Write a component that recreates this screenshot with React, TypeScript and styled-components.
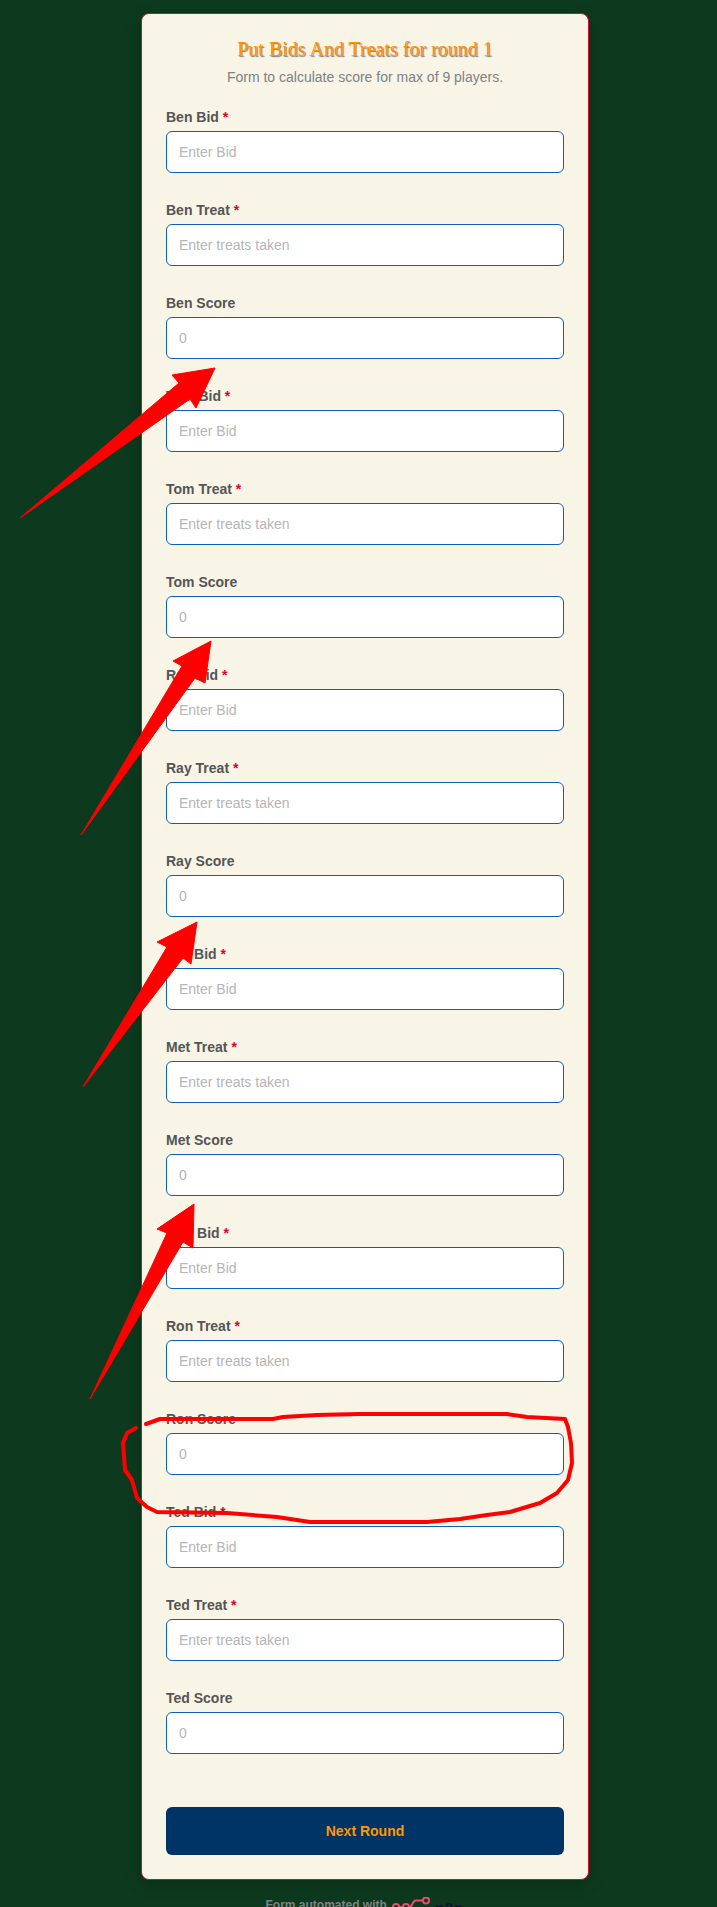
import React from 'react';
import styled, { createGlobalStyle } from 'styled-components';

const players = ['Ben', 'Tom', 'Ray', 'Met', 'Ron', 'Ted'];

const GlobalStyle = createGlobalStyle`
  html, body {
    margin: 0;
    padding: 0;
    background: #0d3a1e;
    font-family: "Liberation Sans", Arial, sans-serif;
  }
  * { box-sizing: border-box; }
`;

const Page = styled.div`
  position: relative;
  width: 717px;
  height: 1907px;
  overflow: hidden;
  padding: 13px 128px 0 141px;
`;

const Card = styled.form`
  padding: 23px 24px 24px;
  background: #f8f4e6;
  border: 1px solid #c8102e;
  border-radius: 8px;
  box-shadow: 0 4px 16px rgba(0, 0, 0, 0.22);
`;

const Header = styled.header`
  text-align: center;
  margin-bottom: 20px;
`;

const Title = styled.h1`
  margin: 0 0 7px;
  font-family: "Liberation Serif", "Times New Roman", serif;
  font-size: 20px;
  line-height: 24px;
  font-weight: 400;
  color: #ff9500;
  text-shadow: 1px 1px 1px #7a7a7a;
`;

const Subtitle = styled.p`
  margin: 0;
  font-size: 14px;
  line-height: 18px;
  color: #7e8186;
`;

const Field = styled.div`
  margin-bottom: 26px;

  &:last-of-type {
    margin-bottom: 0;
  }
`;

const Label = styled.label`
  display: block;
  height: 21px;
  margin-bottom: 4px;
  font-size: 14px;
  line-height: 23px;
  font-weight: 700;
  color: #555555;
`;

const Required = styled.span`
  color: #e0002b;
`;

const Input = styled.input`
  display: block;
  width: 100%;
  height: 42px;
  padding: 0 12px;
  background: #ffffff;
  border: 1px solid #0b5fb8;
  border-radius: 6px;
  font-family: inherit;
  font-size: 14px;
  color: #555555;
  outline: none;

  &::placeholder {
    color: #b5b5b5;
    opacity: 1;
  }
`;

const Submit = styled.button`
  display: block;
  width: 100%;
  height: 48px;
  margin-top: 53px;
  background: #003366;
  border: none;
  border-radius: 6px;
  font-family: inherit;
  font-size: 14px;
  font-weight: 700;
  color: #ff9800;
`;

const Footer = styled.div`
  display: flex;
  align-items: flex-start;
  justify-content: center;
  gap: 5px;
  height: 16px;
  margin-top: 17px;
  font-size: 12px;
  line-height: 16px;
  font-weight: 700;
  color: #7e8186;
`;

const Logo = styled.svg`
  flex: none;
`;

const Brand = styled.span`
  padding-top: 3px;
  font-size: 15px;
  letter-spacing: 1px;
  color: #101330;
`;

const Markup = styled.svg`
  position: absolute;
  top: 0;
  left: 0;
  pointer-events: none;
`;

const arrows = [
  '20,518 179,383 172,375 215,368 196,408 190,399',
  '81,835 182,666 173,661 211,641 205,683 195,678',
  '83,1087 167,947 157,942 197,922 191,964 183,958',
  '90,1399 167,1233 157,1229 194,1204 193,1248 183,1242',
];

const scribble =
  'M146 1424 L160 1419 L273 1419 L283 1417 L317 1415 L360 1414 L507 1414 L527 1417 L565 1419 L568 1427 L571 1443 L572 1463 L568 1480 L557 1493 L540 1503 L510 1512 L487 1515 L460 1519 L427 1522 L310 1522 L277 1517 L227 1513 L157 1512 L147 1507 L137 1498 L132 1480 L125 1470 L123 1443 L127 1433 L136 1428';

export default function App() {
  return (
    <Page>
      <GlobalStyle />
      <Card onSubmit={(e) => e.preventDefault()}>
        <Header>
          <Title>Put Bids And Treats for round 1</Title>
          <Subtitle>Form to calculate score for max of 9 players.</Subtitle>
        </Header>
        {players.map((name) => (
          <React.Fragment key={name}>
            <Field>
              <Label>
                {name} Bid <Required>*</Required>
              </Label>
              <Input placeholder="Enter Bid" />
            </Field>
            <Field>
              <Label>
                {name} Treat <Required>*</Required>
              </Label>
              <Input placeholder="Enter treats taken" />
            </Field>
            <Field>
              <Label>{name} Score</Label>
              <Input placeholder="0" />
            </Field>
          </React.Fragment>
        ))}
        <Submit type="submit">Next Round</Submit>
      </Card>
      <Footer>
        Form automated with
        <Logo width="38" height="16" viewBox="0 0 38 16" fill="none" stroke="#ea4b71" strokeWidth="2">
          <circle cx="4" cy="10" r="3" />
          <circle cx="14" cy="10" r="3" />
          <path d="M7 10h4M17 10c4 0 3-6.5 7-6.5h7" />
          <circle cx="34" cy="3.5" r="3" />
        </Logo>
        <Brand>n8n</Brand>
      </Footer>
      <Markup width="717" height="1907" viewBox="0 0 717 1907">
        {arrows.map((points) => (
          <polygon key={points} points={points} fill="#ff0000" stroke="#ff0000" strokeWidth="1" strokeLinejoin="round" />
        ))}
        <path d={scribble} fill="none" stroke="#ff0000" strokeWidth="4" strokeLinecap="round" strokeLinejoin="round" />
      </Markup>
    </Page>
  );
}
